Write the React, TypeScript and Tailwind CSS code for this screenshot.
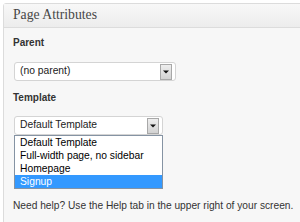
import React from 'react';

const sans = { fontFamily: '"Liberation Sans", Arial, sans-serif' };

function Arrow() {
  return (
    <span className="flex h-[16px] w-[12px] items-center justify-center border border-[#a8a8a8] bg-gradient-to-b from-[#eeeeee] to-[#d2d2d2]">
      <svg width="6" height="4" viewBox="0 0 6 4">
        <path d="M0 0.5h6L3 3.5z" fill="#111" />
      </svg>
    </span>
  );
}

function Select({ value, width }: { value: string; width: string }) {
  return (
    <div className={`flex h-[19px] items-center justify-between rounded-[3px] border border-[#d4d4d4] bg-white pl-[5px] pr-[3px] ${width}`}>
      <span className="text-[10.3px] leading-none text-[#222]">{value}</span>
      <Arrow />
    </div>
  );
}

const options = ['Default Template', 'Full-width page, no sidebar', 'Homepage', 'Signup'];

export default function App() {
  return (
    <div className="h-[222px] w-[300px] overflow-hidden bg-white pl-[3px] pt-[3px]" style={sans}>
      <div className="w-[330px] rounded-tl-[3px] border border-[#dcdcdc] bg-[#f7f7f7]">
        <div className="flex h-[24px] items-center border-b border-[#dcdcdc] bg-gradient-to-b from-[#f8f8f8] to-[#ececec] pl-[9px]">
          <span className="text-[13.7px] text-[#464646]" style={{ fontFamily: '"Liberation Serif", "Times New Roman", serif' }}>
            Page Attributes
          </span>
        </div>
        <div className="flex flex-col pl-[9px] pb-[20px]">
          <div className="mt-[9px] text-[10px] font-bold leading-[12px] text-[#333]">Parent</div>
          <div className="mt-[13px] pl-[1px]">
            <Select value="(no parent)" width="w-[162px]" />
          </div>
          <div className="mt-[11px] text-[10px] font-bold leading-[12px] text-[#333]">Template</div>
          <div className="relative mt-[12px] pl-[1px]">
            <Select value="Default Template" width="w-[149px]" />
            <div className="absolute left-[1px] top-[19px] z-10 w-[149px] border border-[#8593a3] bg-white">
              {options.map((o) => (
                <div
                  key={o}
                  className={`h-[13px] pl-[5px] text-[10.3px] leading-[13px] ${o === 'Signup' ? 'bg-[#3399ff] text-white' : 'text-black'}`}
                >
                  {o}
                </div>
              ))}
            </div>
          </div>
          <div className="mt-[65px] text-[10.2px] leading-[12px] text-[#333]">
            Need help? Use the Help tab in the upper right of your screen.
          </div>
        </div>
      </div>
    </div>
  );
}
